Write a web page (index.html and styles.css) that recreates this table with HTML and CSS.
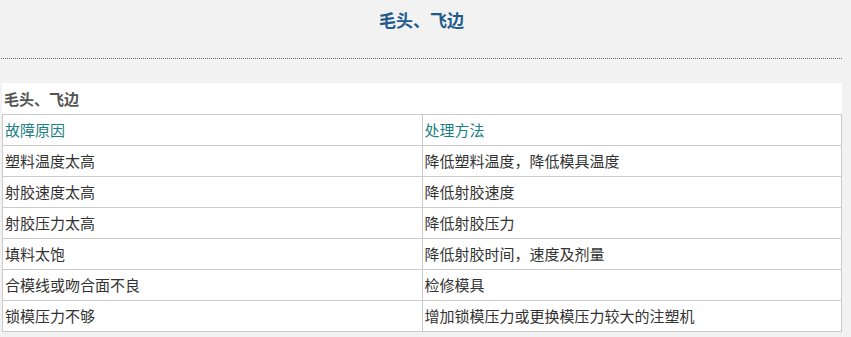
FILE: index.html
```html
<!DOCTYPE html>
<html lang="zh-CN">
<head>
<meta charset="utf-8">
<title>毛头、飞边</title>
<link rel="stylesheet" href="styles.css">
</head>
<body>
<div class="page">
  <h1 class="title">毛头、飞边</h1>
  <div class="panel">
    <div class="caption">毛头、飞边</div>
    <table class="grid">
      <tr class="head"><td>故障原因</td><td>处理方法</td></tr>
      <tr><td>塑料温度太高</td><td>降低塑料温度，降低模具温度</td></tr>
      <tr><td>射胶速度太高</td><td>降低射胶速度</td></tr>
      <tr><td>射胶压力太高</td><td>降低射胶压力</td></tr>
      <tr><td>填料太饱</td><td>降低射胶时间，速度及剂量</td></tr>
      <tr><td>合模线或吻合面不良</td><td>检修模具</td></tr>
      <tr><td>锁模压力不够</td><td>增加锁模压力或更换模压力较大的注塑机</td></tr>
    </table>
  </div>
</div>
</body>
</html>
```
FILE: styles.css
```css
html, body {
  margin: 0;
  padding: 0;
  background: #f2f2f2;
}
body {
  font-family: "Noto Sans CJK SC", "Noto Sans", sans-serif;
  color: #333;
}
.page {
  width: 841px;
  margin-left: 1px;
}
.title {
  margin: 0;
  height: 59px;
  box-sizing: border-box;
  padding-top: 8px;
  font-size: 17px;
  line-height: 24px;
  font-weight: bold;
  color: #225a8c;
  text-align: center;
  border-bottom: 1px dotted #666;
}
.panel {
  margin: 24px 0 0 1px;
  width: 840px;
  background: #fff;
}
.caption {
  height: 31px;
  line-height: 31px;
  padding-left: 2px;
  font-size: 15px;
  font-weight: bold;
  color: #555;
}
.grid {
  width: 840px;
  border-collapse: collapse;
  table-layout: fixed;
  font-size: 15px;
}
.grid td {
  width: 50%;
  height: 30px;
  padding: 0 0 0 2px;
  border: 1px solid #cbcbcb;
  line-height: 20px;
  vertical-align: middle;
  color: #333;
}
.grid .head td {
  color: #1b7f84;
}
```
